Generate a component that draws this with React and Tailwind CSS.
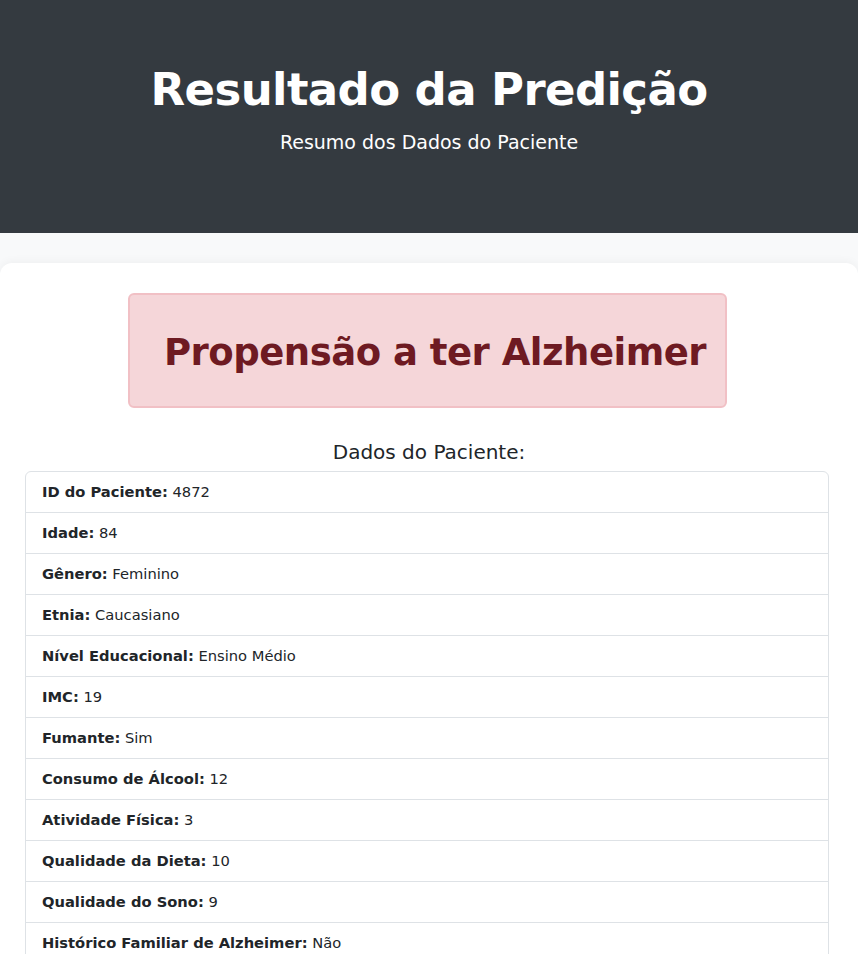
const dados = [
  ['ID do Paciente', '4872'],
  ['Idade', '84'],
  ['Gênero', 'Feminino'],
  ['Etnia', 'Caucasiano'],
  ['Nível Educacional', 'Ensino Médio'],
  ['IMC', '19'],
  ['Fumante', 'Sim'],
  ['Consumo de Álcool', '12'],
  ['Atividade Física', '3'],
  ['Qualidade da Dieta', '10'],
  ['Qualidade do Sono', '9'],
  ['Histórico Familiar de Alzheimer', 'Não'],
  ['Doença Cardiovascular', 'Não'],
];

export default function App() {
  return (
    <div className="min-h-screen bg-[#f8f9fa] text-[#212529]" style={{ fontFamily: '"DejaVu Sans", sans-serif' }}>
      <header className="bg-[#343a40] h-[233px] flex flex-col items-center pt-[62px] text-white">
        <h1 className="text-[45px] leading-[56px] font-bold tracking-[-0.6px]">Resultado da Predição</h1>
        <p className="text-[19px] mt-[12px] leading-[24px]">Resumo dos Dados do Paciente</p>
      </header>

      <main className="mt-[30px] bg-white rounded-t-[12px] shadow-[0_-2px_8px_rgba(0,0,0,0.04)] px-[25px] pt-[30px] pb-10">
        <div className="mx-auto w-[599px] -translate-x-[2px] h-[115px] rounded-[6px] border-2 border-[#f1c0c5] bg-[#f5d6d9] flex items-center justify-center pl-[16px] pt-[4px]">
          <h2 className="text-[37px] font-bold text-[#6e1a22] tracking-[-0.5px]">Propensão a ter Alzheimer</h2>
        </div>

        <h3 className="text-center text-[20px] mt-[29px] mb-[4px] leading-[30px]">Dados do Paciente:</h3>

        <ul className="border border-[#dee2e6] rounded-[6px] w-[804px]">
          {dados.map(([k, v], i) => (
            <li key={k} className={`px-4 py-2 text-[14.7px] leading-[24px] ${i > 0 ? 'border-t border-[#dee2e6]' : ''}`}>
              <strong className="font-bold">{k}:</strong> {v}
            </li>
          ))}
        </ul>
      </main>
    </div>
  );
}
